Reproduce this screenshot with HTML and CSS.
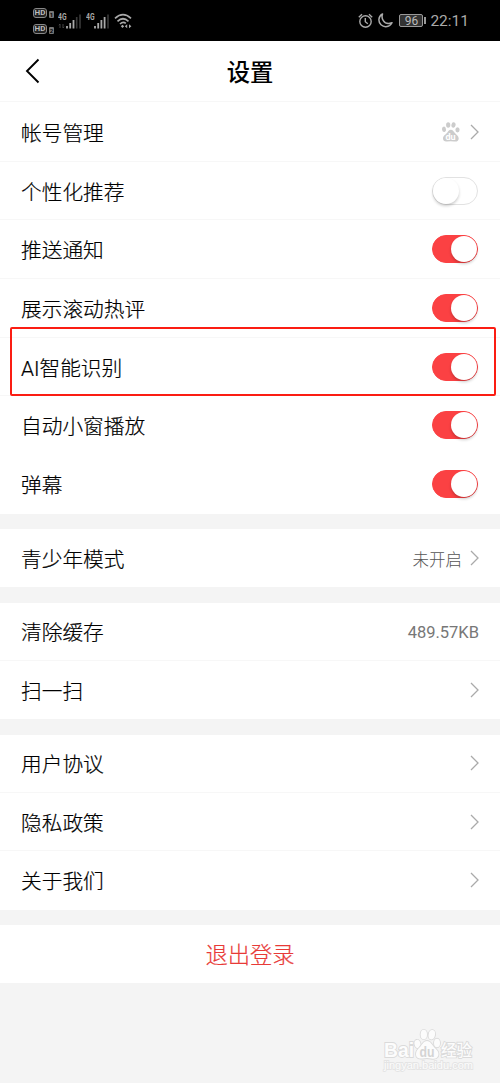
FILE: index.html
```html
<!DOCTYPE html>
<html lang="zh-CN">
<head>
  <meta charset="UTF-8">
  <meta name="viewport" content="width=device-width, initial-scale=1.0">
  <title>设置</title>
  <link rel="stylesheet" href="styles.css">
</head>
<body>
  <div class="status-bar">
    <div class="status-left">
      <div class="hd-group">
        <div class="hd-row"><span class="hd">HD</span><span class="sim">1</span></div>
        <div class="hd-row"><span class="hd">HD</span><span class="sim">2</span></div>
      </div>
      <svg class="signal" width="24" height="18" viewBox="0 0 24 18">
        <text x="0" y="8" class="net" textLength="8.5" lengthAdjust="spacingAndGlyphs">4G</text>
        <path d="M2 12v4M0.8 13.2L2 12M5 12v4M6.2 14.8L5 16" stroke="#444" fill="none"/>
        <path d="M9 14v2.5M12.2 11v5.5M15.5 8v8.5" stroke="#aaa" stroke-width="1.8"/>
        <path d="M18.7 5v11.5M22 2.5v14" stroke="#3a3a3a" stroke-width="1.6"/>
      </svg>
      <svg class="signal" width="24" height="18" viewBox="0 0 24 18">
        <text x="0" y="8" class="net" textLength="8.5" lengthAdjust="spacingAndGlyphs">4G</text>
        <path d="M9 14v2.5M12.2 11v5.5M15.4 8v8.5M18.6 5v11.5" stroke="#aaa" stroke-width="1.8"/>
        <path d="M22 2.5v14" stroke="#3a3a3a" stroke-width="1.6"/>
      </svg>
      <svg class="wifi" width="18" height="16" viewBox="0 0 18 16">
        <path d="M1 5.3Q9 -2 17 5.3M3.5 8.3Q9 3.2 14.5 8.3M6 11Q9 8 11.8 10.3" fill="none" stroke="#aaa" stroke-width="1.7"/>
        <path d="M6.8 13.2l1.7-1.5 1.7 1.5-1.7 1.7zM10.8 13.2l2.4-2v4zM17.4 13.2l-2.4-2v4z" fill="#aaa"/>
      </svg>
    </div>
    <div class="status-right">
      <svg width="15" height="16" viewBox="0 0 15 16" fill="none" stroke="#aaa" stroke-width="1.4">
        <circle cx="7.5" cy="8.5" r="5.7"/>
        <path d="M7.3 5v3.7l2.5 2M0.8 4.2L4 1.2M14.2 4.2L11 1.2"/>
      </svg>
      <svg class="moon" width="15" height="15" viewBox="0 0 15 15">
        <path d="M4.5 1C0 3.5 0 9 3 11.8C6.5 15 12 14 14 9.7C10.5 11.2 7 10.3 5.3 7.7C4 5.8 3.7 3.4 4.5 1z" fill="none" stroke="#aaa" stroke-width="1.5" stroke-linejoin="round"/>
      </svg>
      <span class="battery">96</span><span class="battery-tip"></span>
      <span class="clock">22:11</span>
    </div>
  </div>

  <div class="header">
    <svg class="back" width="16" height="26" viewBox="0 0 16 26">
      <path d="M13.5 1.5L2 13L13.5 24.5" fill="none" stroke="#000" stroke-width="1.9"/>
    </svg>
    <h1>设置</h1>
  </div>

  <div class="group first">
    <div class="row">
      <span class="label">帐号管理</span>
      <svg class="paw" width="20" height="20" viewBox="0 0 20 20" fill="#ccc">
        <ellipse cx="3" cy="7.3" rx="2" ry="2.7" transform="rotate(-12 3 7.3)"/>
        <ellipse cx="7.2" cy="3" rx="2.1" ry="2.8"/>
        <ellipse cx="12.5" cy="3" rx="2.1" ry="2.7" transform="rotate(10 12.5 3)"/>
        <ellipse cx="16.5" cy="7.8" rx="2.1" ry="2.6"/>
        <path d="M9.8 7.8C8 7.8 7.2 9.5 6 11C4.5 12.7 2 13.7 2 16.5C2 18.8 3.7 19.8 6 19.5Q9.8 18.9 13 19.5C16 20 17.7 18.7 17.7 16.4C17.7 14 15.5 13 13.7 10.8C12.5 9.3 11.8 7.8 9.8 7.8z"/>
        <text x="4.5" y="18" class="paw-text">du</text>
      </svg>
      <svg class="arrow" width="9" height="16" viewBox="0 0 9 16"><path d="M1 1L8 8L1 15"/></svg>
    </div>
    <div class="row"><span class="label">个性化推荐</span><span class="switch"></span></div>
    <div class="row"><span class="label">推送通知</span><span class="switch on"></span></div>
    <div class="row"><span class="label">展示滚动热评</span><span class="switch on"></span></div>
    <div class="row"><span class="label">AI智能识别</span><span class="switch on"></span></div>
    <div class="row plain"><span class="label">自动小窗播放</span><span class="switch on"></span></div>
    <div class="row"><span class="label">弹幕</span><span class="switch on"></span></div>
  </div>

  <div class="group">
    <div class="row">
      <span class="label">青少年模式</span>
      <span class="value">未开启</span>
      <svg class="arrow" width="9" height="16" viewBox="0 0 9 16"><path d="M1 1L8 8L1 15"/></svg>
    </div>
  </div>

  <div class="group">
    <div class="row"><span class="label">清除缓存</span><span class="value size">489.57KB</span></div>
    <div class="row">
      <span class="label">扫一扫</span>
      <svg class="arrow" width="9" height="16" viewBox="0 0 9 16"><path d="M1 1L8 8L1 15"/></svg>
    </div>
  </div>

  <div class="group">
    <div class="row">
      <span class="label">用户协议</span>
      <svg class="arrow" width="9" height="16" viewBox="0 0 9 16"><path d="M1 1L8 8L1 15"/></svg>
    </div>
    <div class="row">
      <span class="label">隐私政策</span>
      <svg class="arrow" width="9" height="16" viewBox="0 0 9 16"><path d="M1 1L8 8L1 15"/></svg>
    </div>
    <div class="row">
      <span class="label">关于我们</span>
      <svg class="arrow" width="9" height="16" viewBox="0 0 9 16"><path d="M1 1L8 8L1 15"/></svg>
    </div>
  </div>

  <div class="group">
    <div class="row logout">退出登录</div>
  </div>

  <div class="highlight"></div>

  <svg class="watermark" width="100" height="50" viewBox="0 0 100 50">
    <g fill="#fcfcfc" stroke="#dadada" stroke-width="1.8" paint-order="stroke">
      <text x="4" y="32" class="wm-brand" textLength="30" lengthAdjust="spacingAndGlyphs">Bai</text>
      <ellipse cx="37.5" cy="19" rx="3" ry="4.2" transform="rotate(-12 37.5 19)"/>
      <ellipse cx="43.8" cy="9.5" rx="3.2" ry="4.7"/>
      <ellipse cx="51.8" cy="9.7" rx="3.2" ry="4.7" transform="rotate(10 51.8 9.7)"/>
      <ellipse cx="57" cy="18" rx="3" ry="4.3"/>
      <path d="M47 16C44 16 42.5 19 40.5 21.5C38 24 36 25.5 36 29C36 33 39 34 42.5 33.5Q47 32.7 51 33.5C55.5 34.3 58.5 33 58.5 29C58.5 25.5 55.5 24 53.5 21.5C51.5 19 50 16 47 16z"/>
      <text x="61" y="31" class="wm-cn" textLength="31" lengthAdjust="spacingAndGlyphs">经验</text>
      <text x="4" y="44" class="wm-url" textLength="89" lengthAdjust="spacingAndGlyphs">jingyan.baidu.com</text>
    </g>
    <text x="39.5" y="31.5" class="wm-du" textLength="15" lengthAdjust="spacingAndGlyphs">du</text>
  </svg>
</body>
</html>
```
FILE: styles.css
```css
* {
  box-sizing: border-box;
}

body {
  position: relative;
  margin: 0;
  height: 1083px;
  overflow: hidden;
  background-color: #f4f4f4;
  font-family: Roboto, "Noto Sans CJK SC", sans-serif;
  color: #111;
}

.status-bar {
  display: flex;
  justify-content: space-between;
  height: 41px;
  padding: 0 31px 0 33px;
  background-color: #000;
  color: #aaa;
}

.status-left,
.status-right {
  display: flex;
  align-items: center;
}

.hd-group {
  display: flex;
  flex-direction: column;
  gap: 6px;
  margin-top: 1px;
}

.hd-row {
  display: flex;
  align-items: flex-end;
  gap: 2px;
}

.hd {
  width: 14px;
  height: 10px;
  border: 1px solid #888;
  border-radius: 3px;
  background-color: #222;
  color: #bbb;
  font: bold 8px/8px Roboto, sans-serif;
  text-align: center;
}

.sim {
  width: 5px;
  height: 7px;
  border-radius: 1px;
  background-color: #777;
  color: #000;
  font: bold 6px/7px Roboto, sans-serif;
  text-align: center;
}

.signal {
  margin-left: 4px;
}

.net {
  fill: #aaa;
  font: bold 9.5px Roboto, sans-serif;
}

.wifi {
  margin-left: 4px;
}

.moon {
  margin-left: 5px;
}

.battery {
  width: 24px;
  height: 13px;
  margin-left: 6px;
  border: 1px solid #999;
  border-radius: 2px;
  background-color: #333;
  color: #bbb;
  font-size: 12px;
  line-height: 12px;
  text-align: center;
}

.battery-tip {
  width: 2px;
  height: 7px;
  margin-left: 1px;
  background-color: #999;
}

.clock {
  margin-left: 4px;
  font-size: 15.5px;
}

.header {
  display: grid;
  grid-template-columns: 60px 1fr 60px;
  align-items: center;
  height: 61px;
  background-color: #fff;
  border-bottom: 1px solid #f7f7f7;
}

.back {
  margin-left: 25px;
}

h1 {
  margin: 4px 0 0;
  font-size: 23.3px;
  font-weight: 500;
  line-height: 34px;
  text-align: center;
  color: #000;
}

.group {
  margin-bottom: 15.2px;
  background-color: #fff;
}

.group.first {
  padding-top: 1px;
}

.row {
  display: flex;
  align-items: center;
  height: 58.4px;
  padding: 0 21px;
  border-bottom: 1px solid #f7f7f7;
}

.first .row {
  height: 58.7px;
}

.row:last-child,
.row.plain {
  border-bottom-color: #fff;
}

.label {
  flex: 1;
  padding-top: 4px;
  font-size: 20.7px;
  font-weight: 300;
  line-height: 30px;
  color: #000;
  -webkit-text-stroke: 0.2px #000;
}

.value {
  padding-top: 2px;
  margin-right: 8px;
  font-size: 16.5px;
  font-weight: 300;
  color: #555;
}

.value.size {
  margin-right: 0;
  padding-top: 3px;
  font-weight: 400;
  color: #777;
}

.paw {
  margin-right: 9px;
}

.paw-text {
  fill: #fff;
  font: bold 9px Roboto, sans-serif;
}

.arrow path {
  fill: none;
  stroke: #aaa;
  stroke-width: 1.3;
}

.switch {
  width: 46px;
  height: 28px;
  margin-right: 1px;
  border: 1px solid #e2e2e2;
  border-radius: 14px;
  background-color: #fff;
}

.switch::before {
  content: "";
  display: block;
  width: 26px;
  height: 26px;
  border-radius: 50%;
  background-color: #fff;
  box-shadow: 0 2px 3px rgba(0, 0, 0, 0.2);
}

.switch.on {
  border-color: #fb4143;
  background-color: #fb4143;
}

.switch.on::before {
  margin-left: 18px;
}

.logout {
  justify-content: center;
  padding-top: 2px;
  line-height: 32px;
  font-size: 22.3px;
  font-weight: 300;
  color: #e83a37;
  -webkit-text-stroke: 0.2px #e83a37;
}

.highlight {
  position: absolute;
  left: 10px;
  top: 327px;
  width: 486px;
  height: 69px;
  border: 2px solid #fb1d13;
  border-radius: 2px;
}

.watermark {
  position: absolute;
  left: 380px;
  top: 1025px;
}

.wm-brand {
  font: bold 20px "Liberation Sans", sans-serif;
}

.wm-cn {
  font: 500 16px "Noto Sans CJK SC", sans-serif;
}

.wm-url {
  font: 11px "Liberation Sans", sans-serif;
  stroke: #e4e4e4;
}

.wm-du {
  fill: #d4d4d4;
  font: bold 14px "Liberation Sans", sans-serif;
}
```
